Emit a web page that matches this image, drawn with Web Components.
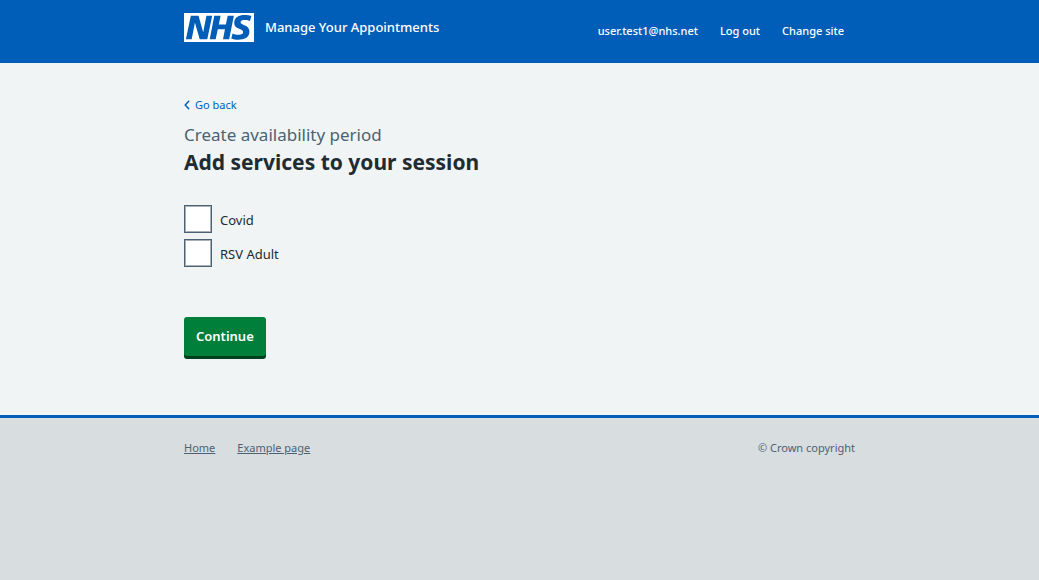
<!DOCTYPE html>
<html lang="en">
<head>
<meta charset="utf-8">
<meta name="viewport" content="width=device-width, initial-scale=1">
<title>Add services to your session</title>
<style>
  :root {
    --blue: #005eb8;
    --slate: #4c6272;
    --ink: #212b32;
    --content: 671px;
  }
  body {
    margin: 0;
    background: #d8dde0;
    color: var(--ink);
    font: 13px/20px "Noto Sans", "Open Sans", Arial, sans-serif;
  }
</style>
</head>
<body>
<app-page>
  <app-header slot="header" service="Manage Your Appointments">
    <nav-link href="#account">user.test1@nhs.net</nav-link>
    <nav-link href="#logout">Log out</nav-link>
    <nav-link href="#sites">Change site</nav-link>
  </app-header>
  <back-link href="#back">Go back</back-link>
  <page-heading caption="Create availability period">Add services to your session</page-heading>
  <service-form>
    <check-option name="covid" label="Covid"></check-option>
    <check-option name="rsv" label="RSV Adult"></check-option>
  </service-form>
  <app-footer slot="footer">
    <footer-link href="#home">Home</footer-link>
    <footer-link href="#example">Example page</footer-link>
    <span slot="legal">© Crown copyright</span>
  </app-footer>
</app-page>

<script>
class BaseElement extends HTMLElement {
  constructor() {
    super();
    this.attachShadow({ mode: "open" });
  }
  connectedCallback() {
    this.shadowRoot.innerHTML = this.render();
  }
}

const WRAP = `.wrap { box-sizing: border-box; max-width: var(--content); margin: 0 auto; }
  @media (max-width: 720px) { .wrap { margin: 0 16px; } }`;

customElements.define("app-page", class extends BaseElement {
  render() {
    return `<style>
      :host { display: block; }
      .body { background: #f0f4f5; }
      main { padding: 32px 0 59px; }
      ${WRAP}
    </style>
    <slot name="header"></slot>
    <div class="body"><div class="wrap"><main><slot></slot></main></div></div>
    <slot name="footer"></slot>`;
  }
});

customElements.define("app-header", class extends BaseElement {
  render() {
    return `<style>
      :host { display: block; background: var(--blue); color: #fff; }
      .wrap { display: flex; flex-wrap: wrap; justify-content: space-between; min-height: 63px; }
      .brand { display: flex; align-items: flex-start; gap: 11px; align-self: flex-start; margin-top: 13px;
        color: inherit; text-decoration: none; font-weight: 500; line-height: 28px; }
      svg { display: block; width: 70px; height: 29px; }
      nav { display: flex; flex-wrap: wrap; align-items: center; gap: 22px; padding: 0 11px 2px 0; }
      ${WRAP}
    </style>
    <header class="wrap">
      <a class="brand" href="#home">
        <svg viewBox="0 0 40 16" preserveAspectRatio="none" role="img" aria-label="NHS">
          <path fill="#fff" d="M0 0h40v16H0z"/>
          <path fill="#005eb8" d="M3.9 1.5h4.4l2.6 9h.1l1.8-9h3.3l-2.8 13H9l-2.7-9h-.1l-1.8 9H1.1M17.3 1.5h3.6l-1 4.9h4L25 1.5h3.5l-2.7 13h-3.5l1.1-5.6h-4.1l-1.2 5.6h-3.4M37.7 4.4c-.7-.3-1.6-.6-2.9-.6-1.4 0-2.5.2-2.5 1.3 0 1.8 5.1 1.2 5.1 5.1 0 3.6-3.3 4.5-6.4 4.5-1.3 0-2.9-.3-4-.7l.8-2.7c.7.4 2.1.7 3.2.7s2.8-.2 2.8-1.5c0-2.1-5.1-1.3-5.1-5 0-3.4 2.9-4.4 5.8-4.4 1.6 0 3.1.2 4 .6"/>
        </svg>
        <span>${this.getAttribute("service")}</span>
      </a>
      <nav aria-label="Account"><slot></slot></nav>
    </header>`;
  }
});

customElements.define("nav-link", class extends BaseElement {
  render() {
    return `<style>
      :host { display: block; }
      a { color: #fff; text-decoration: none; font-size: 11px; font-weight: 500; }
      a:hover { text-decoration: underline; }
    </style><a href="${this.getAttribute("href")}"><slot></slot></a>`;
  }
});

customElements.define("back-link", class extends BaseElement {
  render() {
    return `<style>
      :host { display: block; }
      a { display: inline-flex; align-items: center; gap: 5px; color: var(--blue);
        font-size: 11px; line-height: 20px; text-decoration: none; }
      svg { width: 6px; height: 10px; }
    </style>
    <a href="${this.getAttribute("href")}">
      <svg viewBox="0 0 6 10" aria-hidden="true"><path d="M4.7 1.3 1.2 5l3.5 3.7" fill="none" stroke="currentColor" stroke-width="1.5" stroke-linecap="round" stroke-linejoin="round"/></svg>
      <slot></slot>
    </a>`;
  }
});

customElements.define("page-heading", class extends BaseElement {
  render() {
    return `<style>
      :host { display: block; margin-top: 7px; }
      h1 { margin: 0; font-size: 21px; line-height: 28px; font-weight: 700; }
      .caption { display: block; color: var(--slate); font-size: 17px; line-height: 26px; font-weight: 400; }
    </style>
    <h1><span class="caption">${this.getAttribute("caption")}</span><slot></slot></h1>`;
  }
});

customElements.define("service-form", class extends BaseElement {
  render() {
    return `<style>
      :host { display: block; margin-top: 29px; }
      fieldset { display: flex; flex-direction: column; gap: 6px; border: 0; margin: 0; padding: 0; }
      button { display: block; margin-top: 50px; padding: 9px 12px 10px; border: 0; border-radius: 3px;
        background: #007f3b; box-shadow: 0 3px 0 #00401e; color: #fff; font: inherit; font-weight: 600; }
    </style>
    <form>
      <fieldset aria-label="Services"><slot></slot></fieldset>
      <button type="button">Continue</button>
    </form>`;
  }
});

customElements.define("check-option", class extends BaseElement {
  render() {
    const name = this.getAttribute("name");
    return `<style>
      :host { display: flex; align-items: center; gap: 8px; }
      input { appearance: none; box-sizing: border-box; width: 28px; height: 28px; margin: 0;
        border: 1px solid var(--slate); outline: 0; background: #fff; box-shadow: inset 0 0 0 1px #a5b0b8; }
      input:checked { background: linear-gradient(var(--slate), var(--slate)) center / 14px 14px no-repeat #fff; }
      input:focus-visible { outline: 3px solid #ffeb3b; }
      label { padding-top: 2px; }
    </style>
    <input type="checkbox" id="${name}" name="${name}">
    <label for="${name}">${this.getAttribute("label")}</label>`;
  }
});

customElements.define("app-footer", class extends BaseElement {
  render() {
    return `<style>
      :host { display: block; border-top: 3px solid var(--blue); background: #d8dde0; color: var(--slate);
        font-size: 11px; }
      .wrap { display: flex; flex-wrap: wrap; justify-content: space-between; gap: 8px; padding: 20px 0; }
      nav { display: flex; flex-wrap: wrap; gap: 22px; }
      ${WRAP}
    </style>
    <footer class="wrap">
      <nav aria-label="Footer"><slot></slot></nav>
      <slot name="legal"></slot>
    </footer>`;
  }
});

customElements.define("footer-link", class extends BaseElement {
  render() {
    return `<style>
      :host { display: block; }
      a { color: var(--slate); text-decoration: underline; }
    </style><a href="${this.getAttribute("href")}"><slot></slot></a>`;
  }
});
</script>
</body>
</html>
